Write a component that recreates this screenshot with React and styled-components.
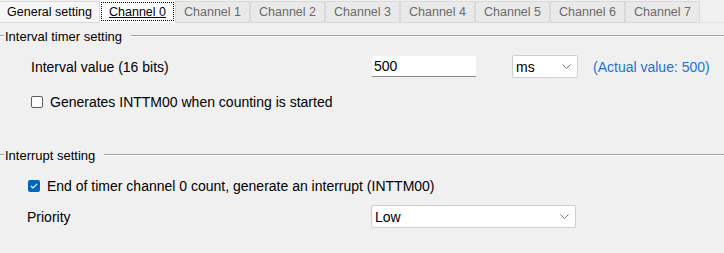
import React from 'react';
import { styled, createGlobalStyle } from 'styled-components';

const GlobalStyle = createGlobalStyle`
  html, body {
    margin: 0;
    padding: 0;
    background: #f0f0f0;
  }
  body {
    font-family: "Liberation Sans", Arial, sans-serif;
    font-size: 14px;
    color: #000;
  }
`;

const Page = styled('div')({
  width: '724px',
  height: '253px',
  background: '#f0f0f0',
  overflow: 'hidden',
});

const TabBar = styled('div')({
  display: 'flex',
  height: '23px',
  borderBottom: '1px solid #e3e3e3',
  boxSizing: 'border-box',
  fontSize: '12.5px',
});

const Tab = styled('div')(({ $active, $plain }) => ({
  width: $plain ? '100px' : '75px',
  height: $active ? '23px' : '22px',
  marginTop: $active ? '0' : '1px',
  boxSizing: 'border-box',
  display: 'flex',
  alignItems: 'center',
  justifyContent: 'center',
  background: $active ? '#ffffff' : $plain ? '#f7f7f7' : '#e9e9e9',
  border: $active ? 'none' : '1px solid #dadada',
  borderLeft: $plain ? 'none' : $active ? 'none' : '1px solid #dadada',
  borderRight: $active ? 'none' : '1px solid #dadada',
  color: $active || $plain ? '#000' : '#6b6b6b',
  padding: $active ? '2px 1px' : '0',
}));

const FocusLabel = styled('span')({
  flex: 1,
  alignSelf: 'stretch',
  display: 'flex',
  alignItems: 'center',
  justifyContent: 'center',
  border: '1px dotted #000',
  textDecoration: 'underline',
});

const Section = styled('section')(({ $top }) => ({
  marginTop: `${$top}px`,
}));

const Legend = styled('div')({
  display: 'flex',
  alignItems: 'center',
  height: '16px',
  fontSize: '13px',
});

const Rule = styled('div')(({ $grow }) => ({
  width: $grow ? 'auto' : '4px',
  flex: $grow ? 1 : 'none',
  height: '1px',
  background: '#a0a0a0',
  borderBottom: '1px solid #ffffff',
  marginLeft: $grow ? '9px' : '0',
}));

const LegendText = styled('span')({
  paddingLeft: '1px',
});

const Row = styled('div')(({ $indent, $top }) => ({
  display: 'flex',
  alignItems: 'center',
  paddingLeft: `${$indent}px`,
  marginTop: `${$top}px`,
  height: '23px',
}));

const Label = styled('span')(({ $width }) => ({
  width: $width ? `${$width}px` : 'auto',
  flex: 'none',
}));

const TextBox = styled('div')({
  width: '104px',
  height: '21px',
  boxSizing: 'border-box',
  background: '#fff',
  borderBottom: '1px solid #8a8a8a',
  padding: '0 2px',
  display: 'flex',
  alignItems: 'center',
});

const Select = styled('div')(({ $width }) => ({
  width: `${$width}px`,
  height: '23px',
  boxSizing: 'border-box',
  background: '#fff',
  border: '1px solid #cfcfcf',
  borderRadius: '2px',
  display: 'flex',
  alignItems: 'center',
  justifyContent: 'space-between',
  padding: '0 6px 0 3px',
}));

const Note = styled('span')({
  color: '#1a72d6',
  marginLeft: '15px',
});

const Box = styled('span')(({ $checked }) => ({
  width: '12px',
  height: '12px',
  boxSizing: 'border-box',
  borderRadius: '2px',
  border: $checked ? 'none' : '1px solid #5c5c5c',
  background: $checked ? '#0067c0' : '#fff',
  display: 'inline-flex',
  alignItems: 'center',
  justifyContent: 'center',
  marginRight: '7px',
  flex: 'none',
}));

const Chevron = () => (
  <svg width="9" height="5" viewBox="0 0 9 5">
    <path d="M0.5 0.5 L4.5 4.5 L8.5 0.5" fill="none" stroke="#777" strokeWidth="1" />
  </svg>
);

const Tick = () => (
  <svg width="8" height="6" viewBox="0 0 8 6">
    <path d="M0.8 3 L3 5 L7.2 0.8" fill="none" stroke="#fff" strokeWidth="1.1" />
  </svg>
);

const channels = ['Channel 1', 'Channel 2', 'Channel 3', 'Channel 4', 'Channel 5', 'Channel 6', 'Channel 7'];

export default function App() {
  return (
    <Page>
      <GlobalStyle />
      <TabBar>
        <Tab $plain>General setting</Tab>
        <Tab $active>
          <FocusLabel>Channel 0</FocusLabel>
        </Tab>
        {channels.map((c) => (
          <Tab key={c}>{c}</Tab>
        ))}
      </TabBar>

      <Section $top={5}>
        <Legend>
          <Rule />
          <LegendText>Interval timer setting</LegendText>
          <Rule $grow />
        </Legend>
        <Row $indent={31} $top={11}>
          <Label $width={341}>Interval value (16 bits)</Label>
          <TextBox>500</TextBox>
          <Label $width={36} />
          <Select $width={66}>
            ms
            <Chevron />
          </Select>
          <Note>(Actual value: 500)</Note>
        </Row>
        <Row $indent={31} $top={12}>
          <Box />
          <Label>Generates INTTM00 when counting is started</Label>
        </Row>
      </Section>

      <Section $top={34}>
        <Legend>
          <Rule />
          <LegendText>Interrupt setting</LegendText>
          <Rule $grow />
        </Legend>
        <Row $indent={28} $top={11}>
          <Box $checked>
            <Tick />
          </Box>
          <Label>End of timer channel 0 count, generate an interrupt (INTTM00)</Label>
        </Row>
        <Row $indent={27} $top={8}>
          <Label $width={344}>Priority</Label>
          <Select $width={205}>
            Low
            <Chevron />
          </Select>
        </Row>
      </Section>
    </Page>
  );
}
